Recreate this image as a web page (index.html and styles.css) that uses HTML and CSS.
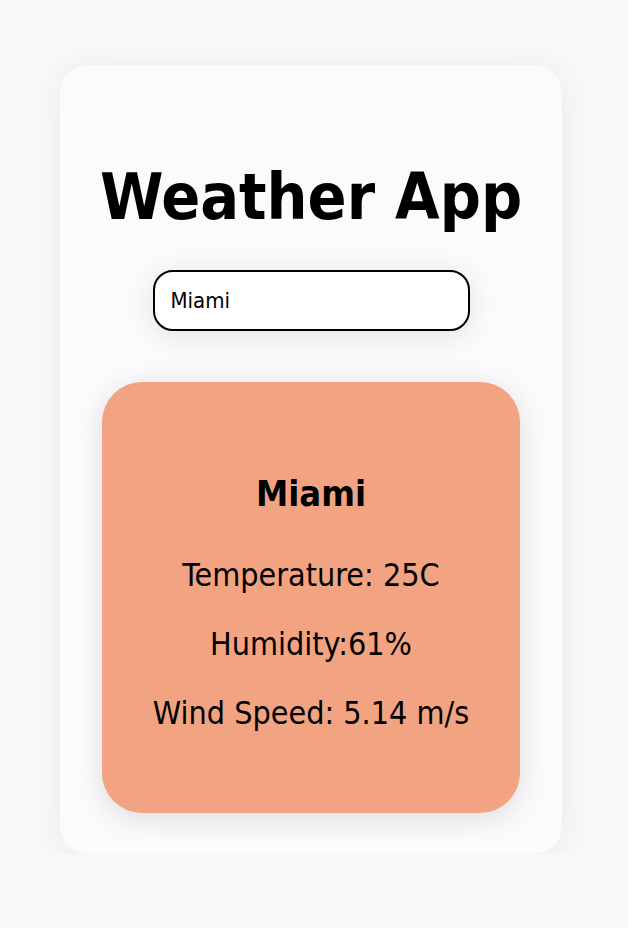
FILE: index.html
```html
<!DOCTYPE html>
<html lang="en">
  <head>
    <meta charset="UTF-8" />
    <meta name="viewport" content="width=device-width, initial-scale=1.0" />
    <title>Weather App</title>
    <link rel="stylesheet" href="styles.css">
  </head>
  <body>
    <div class="container">
      <h1>Weather App</h1>
      <input type="text" id="city" class="city-input" value="Miami" />

      <!-- Weather Card -->
      <div class="weather-card">
        <h2 class="city-name">Miami</h2>
        <p>Temperature: 25C</p>
        <p>Humidity:61%</p>
        <p>Wind Speed: 5.14 m/s</p>
      </div>
    </div>
  </body>
</html>
```

FILE: styles.css
```css
* {
  margin: 0;
  padding: 0;
  box-sizing: border-box;
}

body {
  font-family: "DejaVu Sans Condensed", "DejaVu Sans", sans-serif;
  background-color: #f8f8fa;
  padding: 65px 0 0 60px;
}

.container {
  width: 502px;
  height: 789px;
  padding-top: 92px;
  background-color: #fbfbfd;
  border-radius: 28px;
  box-shadow: 0 4px 30px rgba(0, 0, 0, 0.06);
  display: flex;
  flex-direction: column;
  align-items: center;
}

h1 {
  font-size: 64px;
  line-height: 80px;
  font-weight: bold;
  color: #000;
}

.city-input {
  margin-top: 33px;
  width: 317px;
  height: 61px;
  padding: 0 16px;
  font-family: "DejaVu Sans Condensed", "DejaVu Sans", sans-serif;
  font-size: 22px;
  color: #000;
  background-color: #fff;
  border: 2px solid #000;
  border-radius: 20px;
  box-shadow: 0 4px 30px rgba(0, 0, 0, 0.1);
  outline: none;
}

.weather-card {
  margin-top: 51px;
  width: 418px;
  height: 431px;
  padding-top: 90px;
  background-color: #f2a482;
  border-radius: 40px;
  box-shadow: 0 6px 30px rgba(0, 0, 0, 0.12);
  text-align: center;
}

.city-name {
  font-size: 36px;
  line-height: 44px;
  margin-bottom: 40px;
}

.weather-card p {
  font-size: 32px;
  line-height: 38px;
  margin-bottom: 31px;
}
```
